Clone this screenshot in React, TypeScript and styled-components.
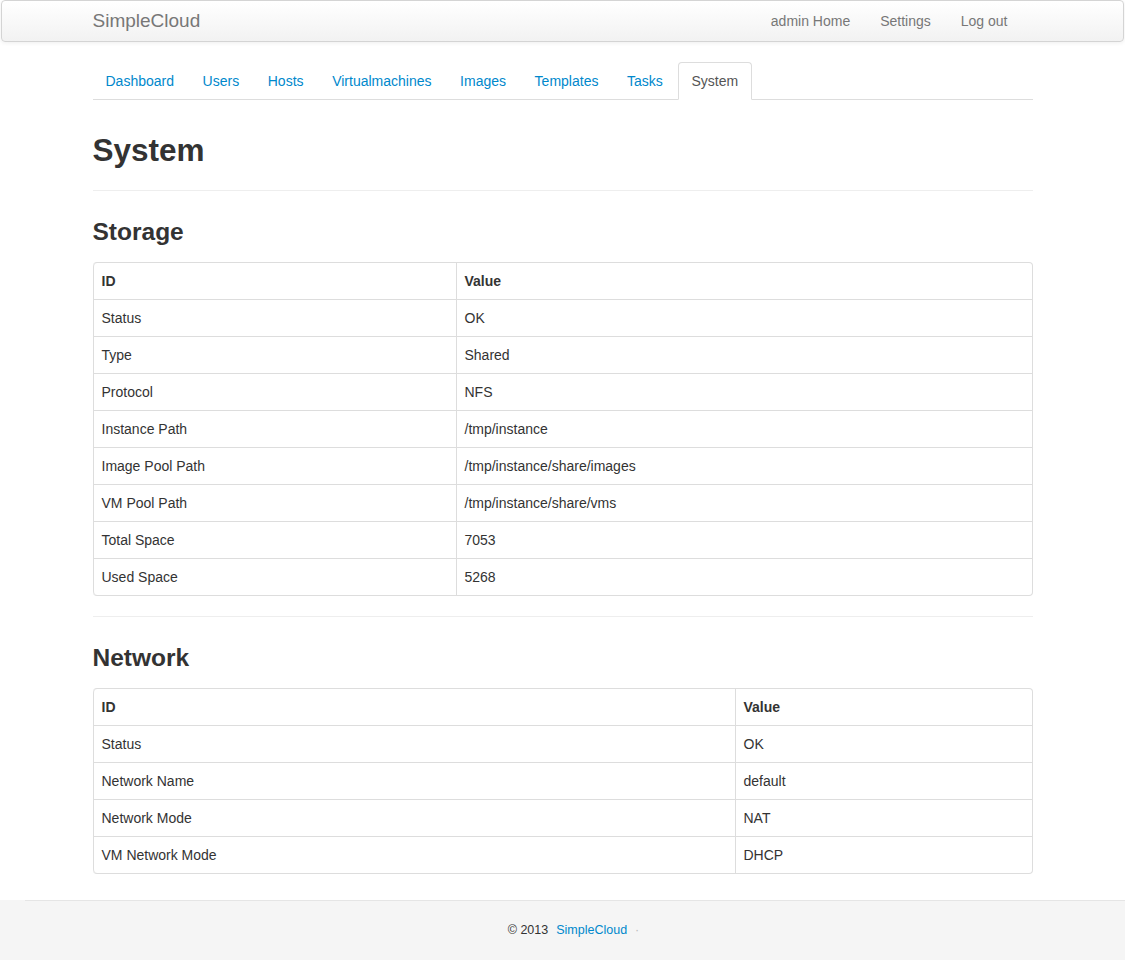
import styled, { createGlobalStyle } from "styled-components";

const GlobalStyle = createGlobalStyle`
  html, body {
    margin: 0;
    padding: 0;
    background: #fff;
  }
  body {
    font-family: "Liberation Sans", Arial, sans-serif;
    font-size: 14px;
    line-height: 20px;
    color: #333;
  }
`;

const tabs = [
  "Dashboard",
  "Users",
  "Hosts",
  "Virtualmachines",
  "Images",
  "Templates",
  "Tasks",
  "System",
];

const storageRows: [string, string][] = [
  ["Status", "OK"],
  ["Type", "Shared"],
  ["Protocol", "NFS"],
  ["Instance Path", "/tmp/instance"],
  ["Image Pool Path", "/tmp/instance/share/images"],
  ["VM Pool Path", "/tmp/instance/share/vms"],
  ["Total Space", "7053"],
  ["Used Space", "5268"],
];

const networkRows: [string, string][] = [
  ["Status", "OK"],
  ["Network Name", "default"],
  ["Network Mode", "NAT"],
  ["VM Network Mode", "DHCP"],
];

const App = () => {
  return (
    <>
      <GlobalStyle />
      <Navbar>
        <Container>
          <Brand href="#">SimpleCloud</Brand>
          <NavRight>
            <NavLink href="#">admin Home</NavLink>
            <NavLink href="#">Settings</NavLink>
            <NavLink href="#">Log out</NavLink>
          </NavRight>
        </Container>
      </Navbar>

      <Container>
        <Main>
          <Tabs>
            {tabs.map((t) => (
              <Tab key={t} $active={t === "System"}>
                <a href="#">{t}</a>
              </Tab>
            ))}
          </Tabs>

          <PageHeader>
            <h2>System</h2>
          </PageHeader>

          <SectionTitle $top={21}>Storage</SectionTitle>
          <InfoTable rows={storageRows} firstCol={363} />

          <Rule />

          <SectionTitle $top={20}>Network</SectionTitle>
          <InfoTable rows={networkRows} firstCol={642} />
        </Main>
      </Container>

      <Footer>
        <span>© 2013</span>
        <FooterLink href="#">SimpleCloud</FooterLink>
        <Dot>·</Dot>
      </Footer>
    </>
  );
};

const InfoTable = ({
  rows,
  firstCol,
}: {
  rows: [string, string][];
  firstCol: number;
}) => (
  <Table>
    <colgroup>
      <col style={{ width: firstCol }} />
      <col />
    </colgroup>
    <thead>
      <tr>
        <th>ID</th>
        <th>Value</th>
      </tr>
    </thead>
    <tbody>
      {rows.map(([k, v]) => (
        <tr key={k}>
          <td>{k}</td>
          <td>{v}</td>
        </tr>
      ))}
    </tbody>
  </Table>
);

export default App;

const Container = styled.div`
  width: 940px;
  margin: 0 auto;
  display: flex;
  flex-direction: column;
`;

const Navbar = styled.div`
  height: 40px;
  margin: 0 1px;
  background: linear-gradient(to bottom, #ffffff, #f2f2f2);
  border: 1px solid #d4d4d4;
  border-radius: 4px;
  box-shadow: 0 1px 4px rgba(0, 0, 0, 0.065);

  ${Container} {
    flex-direction: row;
    align-items: center;
    justify-content: space-between;
    height: 40px;
  }
`;

const Brand = styled.a`
  font-size: 19px;
  color: #777;
  text-decoration: none;
  line-height: 20px;
`;

const NavRight = styled.nav`
  display: flex;
  margin-right: 10px;
`;

const NavLink = styled.a`
  padding: 10px 15px;
  color: #777;
  text-decoration: none;
  font-size: 14px;
`;

const Main = styled.div`
  padding-top: 20px;
`;

const Tabs = styled.ul`
  display: flex;
  list-style: none;
  margin: 0;
  padding: 0;
  border-bottom: 1px solid #ddd;
`;

const Tab = styled.li<{ $active?: boolean }>`
  margin-right: 2px;
  margin-bottom: -1px;

  a {
    display: block;
    padding: 8px 12.6px 8px 12px;
    line-height: 20px;
    text-decoration: none;
    border: 1px solid transparent;
    border-radius: 4px 4px 0 0;
    color: ${(p) => (p.$active ? "#555" : "#0088cc")};
    background: ${(p) => (p.$active ? "#fff" : "transparent")};
    border-color: ${(p) => (p.$active ? "#ddd #ddd transparent" : "transparent")};
  }
`;

const PageHeader = styled.div`
  margin-top: 30px;
  padding-bottom: 10px;
  border-bottom: 1px solid #eee;

  h2 {
    margin: 0 0 10px;
    font-size: 31.5px;
    line-height: 40px;
    font-weight: bold;
    color: #333;
  }
`;

const SectionTitle = styled.h3<{ $top: number }>`
  margin: ${(p) => p.$top}px 0 10px;
  font-size: 24.5px;
  line-height: 40px;
  font-weight: bold;
  color: #333;
`;

const Table = styled.table`
  width: 100%;
  border-collapse: separate;
  border-spacing: 0;
  border: 1px solid #ddd;
  border-left: 0;
  border-radius: 4px;
  margin-bottom: 20px;
  table-layout: fixed;

  th,
  td {
    padding: 8px;
    line-height: 20px;
    text-align: left;
    vertical-align: top;
    border-left: 1px solid #ddd;
    border-top: 1px solid #ddd;
  }

  thead tr:first-child th {
    border-top: 0;
  }

  th {
    font-weight: bold;
  }

  thead tr:first-child th:first-child {
    border-top-left-radius: 4px;
  }

  tbody tr:last-child td:first-child {
    border-bottom-left-radius: 4px;
  }
`;

const Rule = styled.hr`
  width: 100%;
  margin: 0;
  border: 0;
  border-top: 1px solid #eee;
  border-bottom: 1px solid #fff;
`;

const Footer = styled.footer`
  margin-top: 6px;
  height: 60px;
  padding-left: 22px;
  display: flex;
  justify-content: center;
  align-items: center;
  gap: 8px;
  font-size: 12.5px;
  color: #333;
  background:
    linear-gradient(to right, #f5f5f5 25px, #e5e5e5 25px) top / 100% 1px no-repeat,
    #f5f5f5;
`;

const FooterLink = styled.a`
  color: #0088cc;
  text-decoration: none;
`;

const Dot = styled.span`
  color: #bbb;
`;
